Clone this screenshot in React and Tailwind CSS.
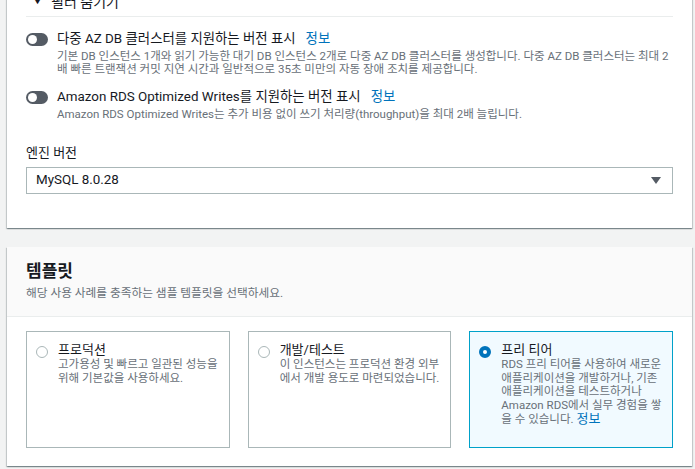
const FONT = "font-['Roboto','Noto_Sans_CJK_KR',sans-serif]"
const CARD = 'bg-white shadow-[0_1px_1px_0_rgba(0,28,36,0.3),1px_1px_1px_0_rgba(0,28,36,0.15),-1px_1px_1px_0_rgba(0,28,36,0.15)]'

function Toggle() {
  return (
    <span className="mt-[1px] flex h-[13px] w-[22px] shrink-0 items-center rounded-full bg-[#545b64] px-[2px]">
      <span className="h-[9px] w-[9px] rounded-full bg-white" />
    </span>
  )
}

function ToggleRow({ label, desc }) {
  return (
    <div className="flex gap-[9px]">
      <Toggle />
      <div className="min-w-0">
        <p className="text-[13.4px] leading-[14px] text-[#16191f]">
          {label}
          <a className="ml-[10px] text-[#0073bb]">정보</a>
        </p>
        <p className="mt-[4px] break-all text-[11.5px] leading-[13px] text-[#687078]">{desc}</p>
      </div>
    </div>
  )
}

function Tile({ title, desc, selected, info }) {
  return (
    <div
      className={
        selected
          ? 'flex h-[117px] gap-[10px] border border-[#00a1c9] bg-[#f1faff] pl-[9px] pr-[3px] pt-[11px]'
          : 'flex h-[117px] gap-[10px] border border-[#aab7b8] bg-white pl-[9px] pr-[3px] pt-[11px]'
      }
    >
      {selected ? (
        <span className="mt-[3px] h-[12px] w-[12px] shrink-0 rounded-full border-[4px] border-[#0073bb] bg-white" />
      ) : (
        <span className="mt-[3px] h-[12px] w-[12px] shrink-0 rounded-full border border-[#aab7b8] bg-white" />
      )}
      <div className="min-w-0">
        <p className="text-[13px] leading-[14px] text-[#16191f]">{title}</p>
        <p className="mt-[1px] text-[11.5px] leading-[13.5px] text-[#687078]">
          {desc}
          {info && <a className="ml-[3px] text-[13px] leading-[13px] text-[#0073bb]">정보</a>}
        </p>
      </div>
    </div>
  )
}

export default function App() {
  return (
    <div className={`h-[469px] overflow-hidden bg-[#f2f3f3] pl-[7px] pr-[3px] ${FONT}`}>
      <div className={`-mt-[14px] px-[19px] pb-[34px] ${CARD}`}>
        <div className="flex h-[31px] items-center gap-[9px] border-b border-[#eaeded] pl-[7px] pt-[2px]">
          <span className="text-[9px] text-[#16191f]">▼</span>
          <span className="text-[14px] text-[#16191f]">필터 숨기기</span>
        </div>
        <div className="mt-[15px] flex flex-col gap-[14px]">
          <ToggleRow
            label="다중 AZ DB 클러스터를 지원하는 버전 표시"
            desc="기본 DB 인스턴스 1개와 읽기 가능한 대기 DB 인스턴스 2개로 다중 AZ DB 클러스터를 생성합니다. 다중 AZ DB 클러스터는 최대 2배 빠른 트랜잭션 커밋 지연 시간과 일반적으로 35초 미만의 자동 장애 조치를 제공합니다."
          />
          <ToggleRow
            label="Amazon RDS Optimized Writes를 지원하는 버전 표시"
            desc="Amazon RDS Optimized Writes는 추가 비용 없이 쓰기 처리량(throughput)을 최대 2배 늘립니다."
          />
        </div>
        <p className="mt-[24px] text-[13px] leading-[16px] text-[#16191f]">엔진 버전</p>
        <div className="mt-[6px] flex h-[27px] items-center justify-between border border-[#aab7b8] pl-[9px] pr-[11px]">
          <span className="text-[13.4px] text-[#16191f]">MySQL 8.0.28</span>
          <svg width="10" height="7" viewBox="0 0 10 7">
            <path d="M0 0h10L5 7z" fill="#545b64" />
          </svg>
        </div>
      </div>

      <div className={`mt-[19px] ${CARD}`}>
        <div className="h-[70px] border-b border-[#eaeded] bg-[#fafafa] px-[19px] pt-[14px]">
          <h2 className="text-[17px] font-bold leading-[20px] text-[#16191f]">템플릿</h2>
          <p className="mt-[5px] text-[11.7px] leading-[14px] text-[#687078]">
            해당 사용 사례를 충족하는 샘플 템플릿을 선택하세요.
          </p>
        </div>
        <div className="grid grid-cols-3 gap-[18px] px-[19px] pb-[18px] pt-[14px]">
          <Tile title="프로덕션" desc="고가용성 및 빠르고 일관된 성능을 위해 기본값을 사용하세요." />
          <Tile title="개발/테스트" desc="이 인스턴스는 프로덕션 환경 외부에서 개발 용도로 마련되었습니다." />
          <Tile
            selected
            info
            title="프리 티어"
            desc="RDS 프리 티어를 사용하여 새로운 애플리케이션을 개발하거나, 기존 애플리케이션을 테스트하거나 Amazon RDS에서 실무 경험을 쌓을 수 있습니다."
          />
        </div>
      </div>
    </div>
  )
}
